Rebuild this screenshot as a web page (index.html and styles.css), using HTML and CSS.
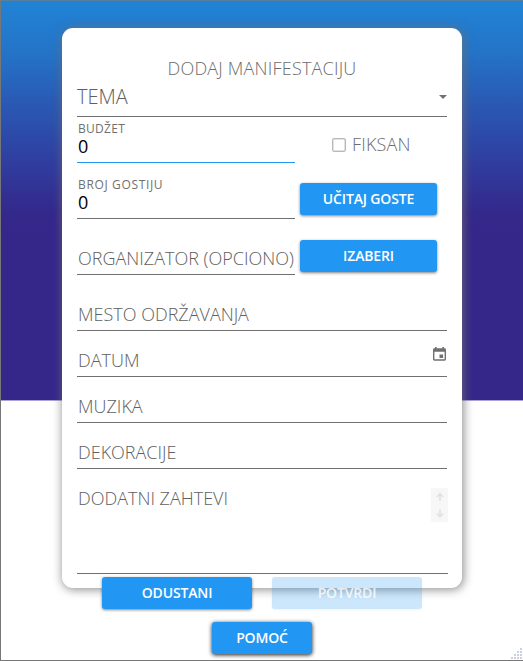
FILE: index.html
```html
<!DOCTYPE html>
<html lang="sr">
<head>
<meta charset="utf-8">
<title>Dodaj manifestaciju</title>
<link rel="stylesheet" href="styles.css">
</head>
<body>
<main class="window">
  <form class="card">
    <h1 class="title">DODAJ MANIFESTACIJU</h1>
    <div class="field select"><span>TEMA</span><i class="caret"></i></div>
    <div class="row budget">
      <div class="field filled active"><label>BUDŽET</label><b>0</b></div>
      <div class="check"><i class="box"></i><span>FIKSAN</span></div>
    </div>
    <div class="row">
      <div class="field filled guests"><label>BROJ GOSTIJU</label><b>0</b></div>
      <button type="button" class="btn side">UČITAJ GOSTE</button>
    </div>
    <div class="row">
      <div class="field"><span>ORGANIZATOR (OPCIONO)</span></div>
      <button type="button" class="btn side second">IZABERI</button>
    </div>
    <div class="field tall"><span>MESTO ODRŽAVANJA</span></div>
    <div class="field date"><span>DATUM</span>
      <svg class="calendar" width="13" height="14" viewBox="0 0 13 14"><path fill="#707070" fill-rule="evenodd" d="M2 0h1.600v1.300h5.800V0H11v1.300h.6q1.400 0 1.400 1.400v9.600q0 1.400-1.400 1.400H1.400Q0 13.700 0 12.300V2.700Q0 1.300 1.400 1.300H2zM1.400 4.700v7.600h10.200V4.700zM6.500 7.500h3.600v3.500H6.500z"/></svg>
    </div>
    <div class="field"><span>MUZIKA</span></div>
    <div class="field"><span>DEKORACIJE</span></div>
    <div class="field area"><span>DODATNI ZAHTEVI</span>
      <span class="scroll">
        <svg width="17" height="17" viewBox="0 0 17 17"><path d="M9 13V6M5.800 9L9 5.800 12.200 9" fill="none" stroke="#e2e2e2" stroke-width="1.700"/></svg>
        <svg width="17" height="17" viewBox="0 0 17 17"><path d="M9 4.500v7M5.800 8.500L9 11.700l3.200-3.200" fill="none" stroke="#e2e2e2" stroke-width="1.700"/></svg>
      </span>
    </div>
  </form>
  <div class="actions">
    <button type="button" class="btn">ODUSTANI</button>
    <button type="button" class="btn off" disabled>POTVRDI</button>
  </div>
  <button type="button" class="btn help">POMOĆ</button>
  <svg class="grip" width="12" height="12" viewBox="0 0 12 12"><path fill="#cbd1de" d="M9 0h2v2H9zM9 3h2v2H9zM9 6h2v2H9zM9 9h2v2H9zM6 3h2v2H6zM6 6h2v2H6zM6 9h2v2H6zM3 6h2v2H3zM3 9h2v2H3zM0 9h2v2H0z"/></svg>
</main>
</body>
</html>
```

FILE: styles.css
```css
* { box-sizing: border-box; }
body { margin: 0; font-family: "Open Sans", "Noto Sans", sans-serif; }
.window {
  position: relative;
  width: 523px;
  height: 661px;
  padding-top: 27px;
  overflow: hidden;
  border: 1px solid #777;
  border-right: 0;
  border-top-color: #557f9f;
  background: linear-gradient(#2183d5 0, #2474c8 50px, #2a58b3 105px, #303c9e 165px, #34288b 212px, #35268a 230px, #35268a 399px, #a9a2d4 399px, #a9a2d4 400px, #fff 400px);
}
.card {
  width: 400px;
  height: 560px;
  margin-left: 61px;
  padding: 28px 15px 0;
  border-radius: 11px;
  background: #fff;
  box-shadow: 1px 1px 10px 1px rgba(112, 112, 112, .75);
}
.title {
  height: 27px;
  margin: 0;
  text-align: center;
  font-size: 18px;
  line-height: 25px;
  font-weight: 340;
  letter-spacing: .2px;
  color: #6c6c6c;
}
.field {
  position: relative;
  display: flex;
  align-items: flex-end;
  width: 370px;
  height: 46px;
  padding: 0 0 3px 1px;
  border-bottom: 1px solid #707070;
  font-size: 18px;
  line-height: 25px;
  font-weight: 340;
  color: #606060;
  white-space: nowrap;
}
.field.select {
  height: 34px;
  padding: 1px 0 0;
  align-items: flex-start;
  justify-content: space-between;
  font-size: 20px;
}
.caret {
  margin-top: 11px;
  border: 4px solid transparent;
  border-top-color: #707070;
  border-bottom: 0;
}
.row { display: flex; align-items: flex-end; height: 56px; }
.row .field { width: 218px; flex: none; }
.row.budget { height: 46px; }
.field.filled {
  flex-direction: column;
  align-items: flex-start;
  justify-content: flex-end;
  padding-bottom: 5px;
}
.filled label { font-size: 12px; line-height: 13px; font-weight: 370; letter-spacing: .3px; color: #707070; }
.guests label { letter-spacing: .65px; }
.filled b { font-size: 18px; line-height: 22px; font-weight: 370; color: #000; }
.field.active { border-color: #2196f3; }
.check {
  display: flex;
  align-items: center;
  gap: 6px;
  margin: 0 0 6px 37px;
  font-size: 18px;
  line-height: 25px;
  font-weight: 340;
  letter-spacing: .15px;
  color: #6c6c6c;
}
.box { width: 14px; height: 14px; border: 1px solid #b9b9b9; border-radius: 2px; box-shadow: inset 0 0 0 .5px #c4c4c4; }
.btn {
  width: 150px;
  height: 32px;
  padding: 0;
  border: 0;
  border-radius: 3px;
  background: #2196f3;
  color: #fff;
  font: 650 14px/32px "Open Sans", "Noto Sans", sans-serif;
  letter-spacing: -.15px;
  box-shadow: 0 1px 3px rgba(0, 0, 0, .5);
}
.btn.side { width: 137px; margin: 0 0 4px 5px; }
.btn.second { margin-bottom: 3px; }
.field.tall { height: 56px; }
.field.area { height: 105px; align-items: flex-start; padding-top: 17px; width: 371px; }
.calendar { margin: 0 1px 12px auto; }
.scroll { display: grid; margin: 2px 0 0 auto; }
.scroll svg { display: block; background: #f7f7f7; }
.actions {
  position: relative;
  display: flex;
  justify-content: center;
  gap: 20px;
  margin-top: -11px;
}
.btn.off {
  background: rgba(33, 150, 243, .23);
  color: rgba(255, 255, 255, .8);
  box-shadow: 0 1px 3px rgba(0, 0, 0, .05);
}
.btn.help { display: block; width: 100px; margin: 13px 0 0 211px; box-shadow: 0 1px 4px rgba(0, 0, 0, .9); }
.grip { position: absolute; right: 0; bottom: 0; }
```
